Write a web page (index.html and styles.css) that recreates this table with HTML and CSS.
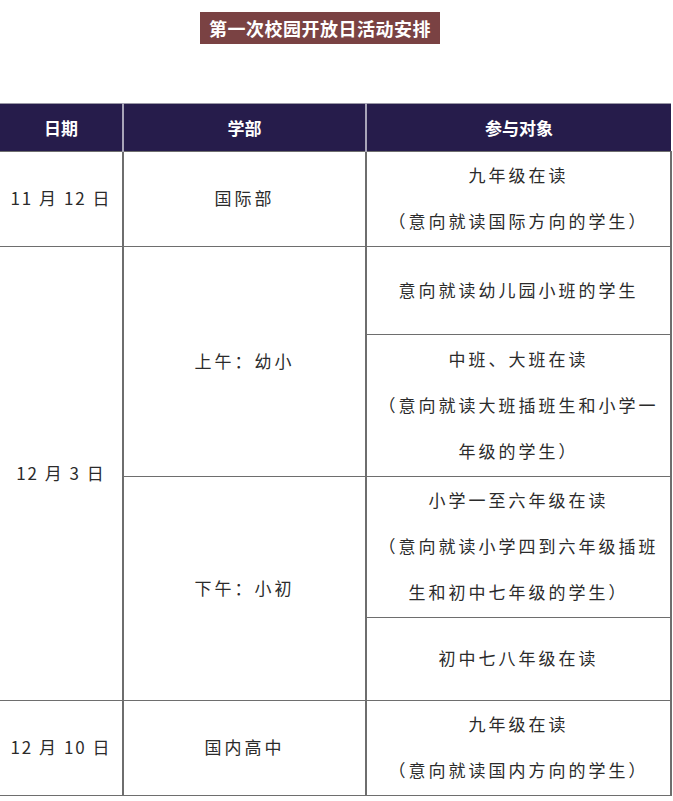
FILE: index.html
```html
<!DOCTYPE html>
<html lang="zh">
<head>
<meta charset="utf-8">
<link rel="stylesheet" href="styles.css">
</head>
<body>
<div class="title-wrap"><h1 class="title">第一次校园开放日活动安排</h1></div>
<table class="sched">
  <colgroup><col class="c1"><col class="c2"><col class="c3"></colgroup>
  <thead>
    <tr class="head"><th>日期</th><th>学部</th><th>参与对象</th></tr>
  </thead>
  <tbody>
    <tr class="r95">
      <td class="date">11 月 12 日</td>
      <td>国际部</td>
      <td>九年级在读<br>（意向就读国际方向的学生）</td>
    </tr>
    <tr class="r88">
      <td class="date" rowspan="4">12 月 3 日</td>
      <td rowspan="2">上午：幼小</td>
      <td>意向就读幼儿园小班的学生</td>
    </tr>
    <tr class="r142">
      <td>中班、大班在读<br>（意向就读大班插班生和小学一<br>年级的学生）</td>
    </tr>
    <tr class="r141">
      <td rowspan="2">下午：小初</td>
      <td>小学一至六年级在读<br>（意向就读小学四到六年级插班<br>生和初中七年级的学生）</td>
    </tr>
    <tr class="r83">
      <td>初中七八年级在读</td>
    </tr>
    <tr class="r95">
      <td class="date">12 月 10 日</td>
      <td>国内高中</td>
      <td>九年级在读<br>（意向就读国内方向的学生）</td>
    </tr>
  </tbody>
</table>
</body>
</html>
```
FILE: styles.css
```css
html, body {
  margin: 0;
  padding: 0;
  background: #ffffff;
}
body {
  font-family: "Noto Sans CJK SC", "Noto Sans", sans-serif;
  color: #2b2b2b;
}
.title-wrap {
  padding: 12px 0 0 200px;
  height: 103px;
  box-sizing: border-box;
}
.title {
  margin: 0;
  display: inline-block;
  width: 240px;
  height: 32px;
  box-sizing: border-box;
  background: #7a4243;
  color: #ffffff;
  font-size: 18px;
  font-weight: 700;
  line-height: 32px;
  text-align: center;
  letter-spacing: 0.5px;
}
.sched {
  border-collapse: collapse;
  table-layout: fixed;
  width: 671px;
}
.c1 { width: 123px; }
.c2 { width: 243px; }
.c3 { width: 305px; }
.sched th {
  background: #261c4b;
  color: #ffffff;
  font-size: 17px;
  font-weight: 700;
  height: 47px;
  padding: 0;
  border-left: 2px solid #a8a4b8;
  border-top: 1px solid #9a98a6;
  border-bottom: 1px dashed #b8b4c8;
  text-align: center;
}
.sched th:first-child { border-left: none; }
.sched td {
  padding: 0 0 2px;
  text-align: center;
  vertical-align: middle;
  font-size: 17px;
  line-height: 46px;
  letter-spacing: 3px;
  border: 1px solid #6e6e6e;
  border-right: 2px solid #6e6e6e;
}
.sched td:first-child { border-left: none; }
.sched td.date { letter-spacing: 2px; }
.r95 td { height: 92px; }
.r88 td { height: 85px; }
.r142 td { height: 139px; }
.r141 td { height: 137px; }
.r83 td { height: 80px; }
```
